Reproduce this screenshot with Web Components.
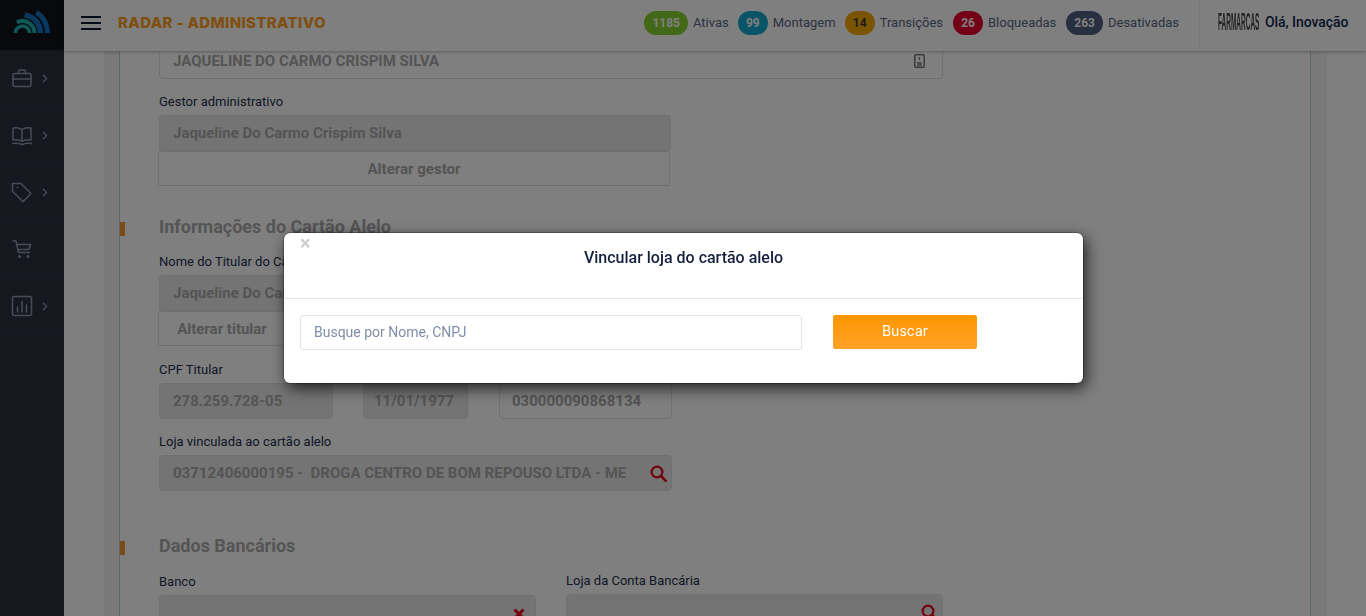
<!DOCTYPE html>
<html lang="pt-BR">
<head>
<meta charset="utf-8">
<title>Radar - Administrativo</title>
<style>
  html, body { margin: 0; height: 100%; overflow: hidden; }
  body { font-family: Roboto, "Liberation Sans", sans-serif; }
</style>
</head>
<body>
<app-shell>
  <side-bar slot="side"></side-bar>
  <top-bar slot="top">
    <status-pill slot="pills" count="1185" color="#86d030" style="margin-right:-1px">Ativas</status-pill>
    <status-pill slot="pills" count="99" color="#12a8cc" style="margin-right:-1px">Montagem</status-pill>
    <status-pill slot="pills" count="14" color="#f5a800" dark>Transições</status-pill>
    <status-pill slot="pills" count="26" color="#e8002c">Bloqueadas</status-pill>
    <status-pill slot="pills" count="263" color="#4e5e80">Desativadas</status-pill>
  </top-bar>
  <form-page>
    <form-field value="JAQUELINE DO CARMO CRISPIM SILVA" icon="badge" style="width:784px;margin-top:-8px"></form-field>

    <form-field label="Gestor administrativo" value="Jaqueline Do Carmo Crispim Silva" disabled style="width:512px;margin-top:15px"></form-field>
    <plain-button style="width:512px">Alterar gestor</plain-button>

    <section-title style="margin-top:30px">Informações do Cartão Alelo</section-title>
    <form-field label="Nome do Titular do Cartão" value="Jaqueline Do Carmo Crispim Silva" disabled style="width:512px;margin-top:16px"></form-field>
    <plain-button style="width:128px">Alterar titular</plain-button>

    <div style="display:grid;grid-template-columns:174px 105px 173px;column-gap:30px;margin-top:16px">
      <form-field label="CPF Titular" value="278.259.728-05" disabled></form-field>
      <form-field label="Nascimento" value="11/01/1977" disabled style="--pad:10px"></form-field>
      <form-field label="Número do Cartão" value="030000090868134" style="margin:0 -1px 0 1px;--pad:12px"></form-field>
    </div>

    <form-field label="Loja vinculada ao cartão alelo" value="03712406000195 -  DROGA CENTRO DE BOM REPOUSO LTDA - ME" icon="search" disabled style="width:513px;margin-top:15px"></form-field>

    <section-title style="margin-top:44px">Dados Bancários</section-title>
    <div style="display:grid;grid-template-columns:377px 377px;column-gap:30px;margin-top:17px">
      <form-field label="Banco" icon="cross" disabled></form-field>
      <form-field label="Loja da Conta Bancária" icon="search" disabled style="margin-top:-1px"></form-field>
    </div>
  </form-page>
</app-shell>

<link-modal title-text="Vincular loja do cartão alelo"></link-modal>

<script>
const ICONS = {
  briefcase: '<rect x="2" y="6.5" width="18" height="13" rx="2"/><path d="M7.5 6.5V4.2q0-1.2 1.2-1.2h4.6q1.2 0 1.2 1.2v2.3M2 12h18"/>',
  book: '<path d="M11 5.5C9 3.8 5.5 3.5 2 4v12c3.500-.5 7-.2 9 1.500 2-1.700 5.500-2 9-1.500V4c-3.500-.5-7-.2-9 1.500zM11 5.500v12M1.500 19.500c3.500-.5 7-.2 9.500 1.200 2.500-1.400 6-1.700 9.500-1.200"/>',
  tag: '<path d="M1.500 2.500h8.500l10 10-8 8.200-10.500-10.400zM6 6.500h.6"/>',
  cart: '<path d="M2 3h3l2.500 11.500h11M5.700 6.500h14l-1.800 5H6.800"/><circle cx="8.500" cy="18.500" r=".8"/><circle cx="17" cy="18.500" r=".8"/>',
  chart: '<rect x="1.500" y="1.500" width="19" height="19" rx="2"/><path d="M6.500 17v-5M11 17V6.500M15.500 17v-7"/>'
};

class AppShell extends HTMLElement {
  constructor() {
    super();
    this.attachShadow({ mode: 'open' });
    this.shadowRoot.innerHTML = `
      <style>
        :host { display: flex; height: 616px; overflow: hidden; }
        .main { flex: 1; min-width: 0; display: flex; flex-direction: column; }
        .scroll { flex: 1; min-height: 0; overflow: hidden; display: flex; background: #fff; }
        .side-gap { width: 40px; flex: none; }
        .panel { flex: 1; min-width: 0; padding: 0 16px 0 15px; background: #f2f2f2; display: flex; }
        .right-gap { width: 39px; flex: none; background: #fcfcfe; }
      </style>
      <slot name="side"></slot>
      <div class="main">
        <slot name="top"></slot>
        <div class="scroll">
          <div class="side-gap"></div>
          <div class="panel"><slot></slot></div>
          <div class="right-gap"></div>
        </div>
      </div>`;
  }
}
customElements.define('app-shell', AppShell);

class SideBar extends HTMLElement {
  constructor() {
    super();
    this.attachShadow({ mode: 'open' });
    const rows = ['briefcase', 'book', 'tag', 'cart', 'chart'].map(name => `
      <div class="row">
        <svg class="ico" width="22" height="23" viewBox="0 0 22 23" fill="none" stroke="#8e98ac" stroke-width="1.500" stroke-linejoin="round" stroke-linecap="round">${ICONS[name]}</svg>
        ${name === 'cart' ? '' : '<svg class="chev" width="6" height="9" viewBox="0 0 6 9" fill="none" stroke="#8e98ac" stroke-width="1.300"><path d="M1 .8l3.500 3.700L1 8.200"/></svg>'}
      </div>`).join('');
    this.shadowRoot.innerHTML = `
      <style>
        :host { display: block; width: 64px; flex: none; background: #2a303e; }
        .logo { height: 50px; background: #0e1219; display: flex; align-items: flex-start; padding: 10px 0 0 13px; box-sizing: border-box; }
        .row { height: 57px; box-sizing: border-box; border-bottom: 1px solid #30364a; display: flex; align-items: center; padding: 0 0 0 11px; gap: 9px; }
        .ico { flex: none; }
      </style>
      <div class="logo">
        <svg width="38" height="23" viewBox="0 0 38 23" fill="none">
          <path d="M23.480 2.270A25 25 0 0 1 34.500 23" stroke="#1272c0" stroke-width="5"/>
          <path d="M11.690 5.130A18 18 0 0 1 27.500 23" stroke="#1272c0" stroke-width="5.500"/>
          <path d="M3.870 12.400A12 12 0 0 1 21.500 23" stroke="#1cb0b0" stroke-width="4"/>
          <path d="M2.500 23A7 7 0 0 1 16.500 23" stroke="#1cb0b0" stroke-width="3.500"/>
        </svg>
      </div>
      ${rows}`;
  }
}
customElements.define('side-bar', SideBar);

class TopBar extends HTMLElement {
  constructor() {
    super();
    this.attachShadow({ mode: 'open' });
    this.shadowRoot.innerHTML = `
      <style>
        :host { display: flex; align-items: center; box-sizing: border-box; height: 51px; padding-bottom: 5px; flex: none; background: #fff; position: relative; z-index: 2; box-shadow: 0 1px 3px rgba(0,0,0,.28); }
        .burger { width: 20px; margin-left: 17px; display: flex; flex-direction: column; gap: 4px; }
        .burger i { display: block; height: 2px; background: #0b1b36; }
        h1 { margin: 0 0 0 17px; font: 800 15px/20px Inter, Roboto, sans-serif; letter-spacing: .34px; color: #ff9f20; white-space: nowrap; }
        .pills { margin-left: auto; display: flex; align-items: center; gap: 10px; }
        .user { margin-left: 20px; height: 51px; margin-bottom: -5px; padding-bottom: 7px; box-sizing: border-box; width: 167px; border-left: 1px solid #f2f2f2; display: flex; align-items: center; padding-left: 18px; gap: 9px; }
        .brand { width: 38px; flex: none; font: 700 24px/24px "Liberation Sans", sans-serif; color: #444; transform: scaleX(.27); transform-origin: 0 50%; white-space: nowrap; filter: blur(.6px); }
        .name { font: 500 14px/20px Roboto, sans-serif; letter-spacing: -.05px; color: #13264d; white-space: nowrap; }
      </style>
      <div class="burger"><i></i><i></i><i></i></div>
      <h1>RADAR - ADMINISTRATIVO</h1>
      <div class="pills"><slot name="pills"></slot></div>
      <div class="user"><span class="brand">FARMARCAS</span><span class="name">Olá, Inovação</span></div>`;
  }
}
customElements.define('top-bar', TopBar);

class StatusPill extends HTMLElement {
  constructor() {
    super();
    this.attachShadow({ mode: 'open' });
    const count = this.getAttribute('count');
    this.shadowRoot.innerHTML = `
      <style>
        :host { display: inline-flex; align-items: center; gap: 5px; }
        b { box-sizing: border-box; height: 24px; min-width: 30px; padding: 0 ${count.length > 2 ? 8 : 7}px; border-radius: 12px; background: ${this.getAttribute('color')};
            color: ${this.hasAttribute('dark') ? '#34363d' : '#fff'}; font: 700 12px/24px Roboto, sans-serif; text-align: center; }
        span { font: 400 13px/24px Roboto, sans-serif; color: #596680; white-space: nowrap; }
      </style>
      <b>${count}</b><span><slot></slot></span>`;
  }
}
customElements.define('status-pill', StatusPill);

class FormPage extends HTMLElement {
  constructor() {
    super();
    this.attachShadow({ mode: 'open' });
    this.shadowRoot.innerHTML = `
      <style>
        :host { display: block; flex: 1; min-width: 0; overflow: hidden; box-sizing: border-box; background: #fff; border-left: 1px solid #b8cfe0; border-right: 1px solid #b8cfe0; padding-left: 39px; }
      </style>
      <slot></slot>`;
  }
}
customElements.define('form-page', FormPage);

class SectionTitle extends HTMLElement {
  constructor() {
    super();
    this.attachShadow({ mode: 'open' });
    this.shadowRoot.innerHTML = `
      <style>
        :host { display: flex; align-items: center; margin-left: -39px; gap: 34px; height: 22px; }
        i { width: 5px; height: 14px; margin-top: 3px; background: #f5972a; flex: none; }
        span { font: 700 18px/22px Roboto, sans-serif; color: #aaa; white-space: nowrap; }
      </style>
      <i></i><span><slot></slot></span>`;
  }
}
customElements.define('section-title', SectionTitle);

class FormField extends HTMLElement {
  constructor() {
    super();
    this.attachShadow({ mode: 'open' });
    const label = this.getAttribute('label');
    const icon = this.getAttribute('icon');
    const svgs = {
      badge: '<svg width="11" height="14" viewBox="0 0 11 14" fill="none" stroke="#777" stroke-width="1.500"><rect x=".8" y=".8" width="9.400" height="12.400" rx="1"/><path d="M5.500 3v3M3.200 9h4.600M3.200 11h4.600" stroke-width="1.300"/></svg>',
      search: '<svg width="17" height="17" viewBox="0 0 17 17" fill="none" stroke="#e8001c" stroke-width="2.200"><circle cx="7" cy="7" r="5.400"/><path d="M11 11l4.800 4.800" stroke-linecap="round" stroke-width="2.600"/></svg>',
      cross: '<svg width="12" height="12" viewBox="0 0 12 12" fill="none" stroke="#e8001c" stroke-width="3"><path d="M1.500 1.500l9 9M10.500 1.500l-9 9"/></svg>'
    };
    this.shadowRoot.innerHTML = `
      <style>
        :host { display: block; }
        label { display: block; font: 400 13px/16px Roboto, sans-serif; color: #22304e; margin-bottom: 5px; white-space: nowrap; }
        .box { box-sizing: border-box; height: 36px; border: 1px solid #dfe1e6; border-radius: 4px; background: #fff; padding: 0 5px 0 var(--pad, 13px); display: flex; align-items: center; justify-content: space-between; gap: 6px; }
        :host([disabled]) .box { background: #e9e9e9; }
        span { font: 700 15px/20px Roboto, sans-serif; color: #a8a8a8; white-space: pre; overflow: hidden; }
        .icon { display: flex; flex: none; }
        :host([icon=badge]) .box { padding-right: 17px; }
        :host([icon=cross]) .box { padding-right: 10px; padding-top: 2px; }
        :host([icon=search]) .box { padding-right: 4px; }
      </style>
      ${label ? `<label>${label}</label>` : ''}
      <div class="box"><span>${this.getAttribute('value') || ''}</span>${icon ? `<div class="icon">${svgs[icon]}</div>` : ''}</div>`;
  }
}
customElements.define('form-field', FormField);

class PlainButton extends HTMLElement {
  constructor() {
    super();
    this.attachShadow({ mode: 'open' });
    this.shadowRoot.innerHTML = `
      <style>
        :host { display: block; box-sizing: border-box; height: 35px; margin-left: -1px; border: 1px solid #dfe1e6; border-radius: 2px; background: #fff; text-align: center; font: 700 15px/35px Roboto, sans-serif; color: #a8a8a8; white-space: nowrap; }
      </style>
      <slot></slot>`;
  }
}
customElements.define('plain-button', PlainButton);

class LinkModal extends HTMLElement {
  constructor() {
    super();
    this.attachShadow({ mode: 'open' });
    this.shadowRoot.innerHTML = `
      <style>
        :host { position: fixed; inset: 0; z-index: 10; background: rgba(0,0,0,.5); display: flex; justify-content: center; align-items: flex-start; padding: 233px 0 0 1px; box-sizing: border-box; }
        .dialog { width: 799px; height: 150px; background: #fff; border-radius: 6px; position: relative; box-shadow: 0 0 0 .5px rgba(0,0,0,.5), 3px 5px 16px rgba(0,0,0,.75); display: flex; flex-direction: column; }
        .close { position: absolute; left: 16px; top: 0; font: 700 20px/20px Roboto, sans-serif; color: #ccc; }
        header { height: 66px; box-sizing: border-box; border-bottom: 1px solid #e4e4e9; padding-top: 15px; text-align: center; }
        header span { font: 500 16px/20px Roboto, sans-serif; color: #14213d; }
        .body { display: flex; align-items: flex-start; padding: 16px 0 0 16px; }
        .search { box-sizing: border-box; width: 502px; height: 35px; border: 1px solid #e2e4ec; border-radius: 3px; padding-left: 13px; font: 400 14px/33px Roboto, sans-serif; color: #7f8ea8; }
        .go { width: 144px; height: 34px; margin-left: 31px; border-radius: 2px; background: linear-gradient(#ff9603, #ffa228); color: #fff; text-align: center; font: 400 14px/32px Inter, Roboto, sans-serif; }
      </style>
      <div class="dialog">
        <span class="close">×</span>
        <header><span>${this.getAttribute('title-text')}</span></header>
        <div class="body">
          <div class="search">Busque por Nome, CNPJ</div>
          <div class="go">Buscar</div>
        </div>
      </div>`;
  }
}
customElements.define('link-modal', LinkModal);
</script>
</body>
</html>
